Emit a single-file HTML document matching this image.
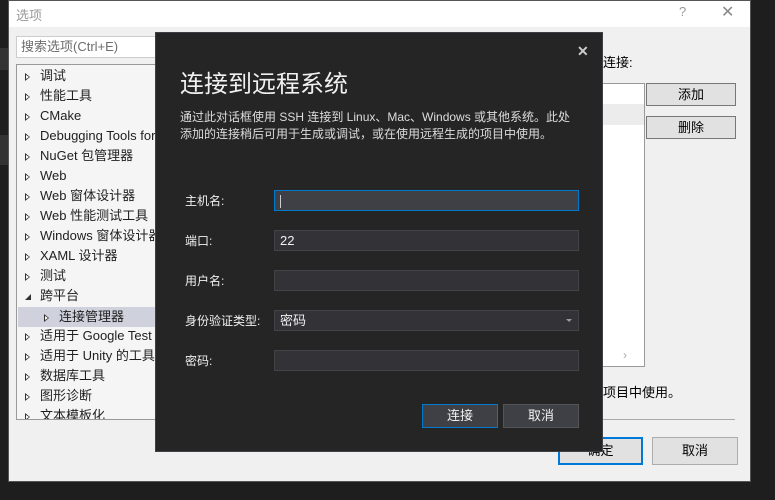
<!DOCTYPE html>
<html><head><meta charset="utf-8"><style>
*{margin:0;padding:0;box-sizing:border-box}
body{width:775px;height:500px;background:#1e1e1e;position:relative;overflow:hidden;font-family:"Liberation Sans","Noto Sans CJK SC",sans-serif;font-size:12px}
.a{position:absolute}
.outer{left:8px;top:0;width:743px;height:482px;background:#f0f0f0;border:1px solid #555}
.tb{left:0;top:0;width:741px;height:26px;background:#fff}
.tree div{position:absolute;left:8px;height:20px;line-height:20px;color:#1e1e1e;white-space:nowrap;font-size:13px}
.tri{display:inline-block;width:0;height:0;border-left:5px solid #333;border-top:4px solid transparent;border-bottom:4px solid transparent;margin-right:10px;vertical-align:middle;position:relative}
.tri:after{content:"";position:absolute;left:-4px;top:-2px;border-left:3px solid #fff;border-top:2px solid transparent;border-bottom:2px solid transparent}
.btn{background:#e1e1e1;border:1px solid #adadad;text-align:center;color:#000;font-size:13px}
.dlg{left:155px;top:32px;width:448px;height:420px;background:#252526;border:1px solid #3f3f46;color:#f1f1f1}
.lbl{left:29px;color:#f1f1f1;font-size:12px}
.fld{left:118px;width:305px;height:21px;background:#333337;border:1px solid #434346;color:#f1f1f1;padding-left:5px;line-height:19px;font-size:13px}
.db{width:76px;height:24px;background:#333337;border:1px solid #555;text-align:center;line-height:22px;color:#f1f1f1;font-size:13px}
</style></head><body>
<div class="a" style="left:0;top:48px;width:8px;height:22px;background:#333"></div>
<div class="a" style="left:0;top:135px;width:8px;height:30px;background:#333"></div>
<div class="a outer">
 <div class="a tb"><span class="a" style="left:7px;top:4px;color:#999;font-size:13px">选项</span>
  <span class="a" style="left:670px;top:3px;color:#999;font-size:13px">?</span>
  <span class="a" style="left:712px;top:1px;color:#888;font-size:16px;font-weight:100">✕</span></div>
 <div class="a" style="left:7px;top:35px;width:150px;height:22px;background:#fff;border:1px solid #ccc;color:#6d6d6d;padding-left:4px;line-height:20px;font-size:13px">搜索选项(Ctrl+E)</div>
 <div class="a tree" style="left:7px;top:63px;width:150px;height:356px;background:#f5f5f5;border:1px solid #999;overflow:hidden">
  <div style="top:1px"><i class="tri"></i>调试</div>
  <div style="top:21px"><i class="tri"></i>性能工具</div>
  <div style="top:41px"><i class="tri"></i>CMake</div>
  <div style="top:61px"><i class="tri"></i>Debugging Tools for</div>
  <div style="top:81px"><i class="tri"></i>NuGet 包管理器</div>
  <div style="top:101px"><i class="tri"></i>Web</div>
  <div style="top:121px"><i class="tri"></i>Web 窗体设计器</div>
  <div style="top:141px"><i class="tri"></i>Web 性能测试工具</div>
  <div style="top:161px"><i class="tri"></i>Windows 窗体设计器</div>
  <div style="top:181px"><i class="tri"></i>XAML 设计器</div>
  <div style="top:201px"><i class="tri"></i>测试</div>
  <div style="top:221px"><span style="display:inline-block;width:0;height:0;border-right:6px solid #333;border-top:6px solid transparent;margin-right:9px"></span>跨平台</div>
  <div style="top:242px;left:1px;width:150px;background:#cfd1dd;padding-left:26px"><i class="tri"></i>连接管理器</div>
  <div style="top:261px"><i class="tri"></i>适用于 Google Test</div>
  <div style="top:281px"><i class="tri"></i>适用于 Unity 的工具</div>
  <div style="top:301px"><i class="tri"></i>数据库工具</div>
  <div style="top:321px"><i class="tri"></i>图形诊断</div>
  <div style="top:341px"><i class="tri"></i>文本模板化</div>
 </div>
 <span class="a" style="left:594px;top:51px;color:#000;font-size:13px">连接:</span>
 <div class="a" style="left:580px;top:82px;width:56px;height:284px;background:#fff;border:1px solid #999"></div>
 <div class="a" style="left:581px;top:103px;width:54px;height:21px;background:#ececec"></div>
 <span class="a" style="left:614px;top:347px;color:#aaa">›</span>
 <div class="a btn" style="left:637px;top:82px;width:90px;height:23px;line-height:21px;border-color:#777">添加</div>
 <div class="a btn" style="left:637px;top:115px;width:90px;height:23px;line-height:21px;border-color:#777">删除</div>
 <span class="a" style="left:594px;top:381px;color:#000;font-size:13px">项目中使用。</span>
 <div class="a" style="left:590px;top:418px;width:136px;height:1px;background:#aaa"></div>
 <div class="a btn" style="left:549px;top:436px;width:85px;height:28px;line-height:24px;border:2px solid #0078d7">确定</div>
 <div class="a btn" style="left:643px;top:436px;width:86px;height:28px;line-height:26px">取消</div>
</div>
<div class="a dlg">
 <span class="a" style="left:421px;top:10px;font-size:14px;color:#ccc;font-weight:bold">✕</span>
 <div class="a" style="left:24px;top:35px;font-size:24px;color:#f1f1f1;line-height:34px">连接到远程系统</div>
 <div class="a" style="left:24px;top:76px;width:400px;line-height:17px;font-size:12px;color:#ddd">通过此对话框使用 SSH 连接到 Linux、Mac、Windows 或其他系统。此处添加的连接稍后可用于生成或调试，或在使用远程生成的项目中使用。</div>
 <span class="a lbl" style="top:159px">主机名:</span>
 <div class="a fld" style="top:157px;background:#3f3f46;border-color:#007acc"><span style="display:inline-block;width:1px;height:13px;background:#ccc;vertical-align:middle"></span></div>
 <span class="a lbl" style="top:199px">端口:</span>
 <div class="a fld" style="top:197px">22</div>
 <span class="a lbl" style="top:239px">用户名:</span>
 <div class="a fld" style="top:237px"></div>
 <span class="a lbl" style="top:279px">身份验证类型:</span>
 <div class="a fld" style="top:277px">密码<span class="a" style="right:6px;top:8px;border-top:3px solid #999;border-left:3px solid transparent;border-right:3px solid transparent"></span></div>
 <span class="a lbl" style="top:319px">密码:</span>
 <div class="a fld" style="top:317px"></div>
 <div class="a db" style="left:266px;top:371px;border-color:#007acc;background:#3f3f46">连接</div>
 <div class="a db" style="left:347px;top:371px;background:#3f3f46">取消</div>
</div>
</body></html>
